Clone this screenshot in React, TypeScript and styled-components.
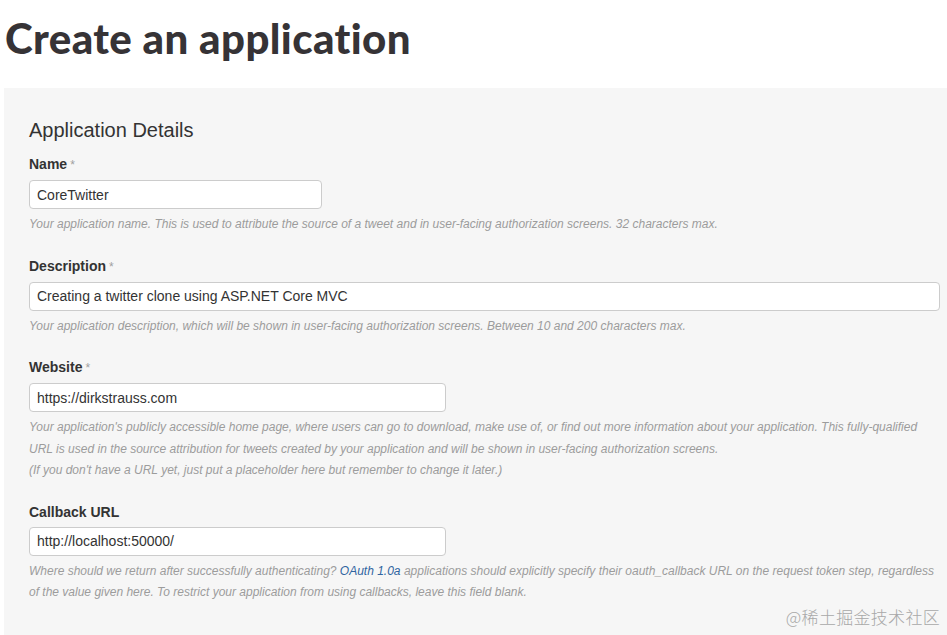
import React from 'react';
import styled, { createGlobalStyle } from 'styled-components';

const GlobalStyle = createGlobalStyle`
  html, body {
    margin: 0;
    padding: 0;
    background: #ffffff;
    font-family: 'Liberation Sans', Arial, sans-serif;
  }
`;

const Page = styled.div`
  position: relative;
  width: 947px;
  height: 635px;
  overflow: hidden;
`;

const Title = styled.h1`
  margin: 13px 0 0 5px;
  height: 50px;
  line-height: 50px;
  font-family: 'Lato', 'Liberation Sans', sans-serif;
  font-weight: 900;
  font-size: 42px;
  letter-spacing: 0.4px;
  color: #363336;
`;

const Panel = styled.div`
  margin: 25px 0 0 4px;
  padding: 31px 7px 60px 25px;
  background: #f6f6f6;
`;

const Heading = styled.h3`
  margin: 0 0 13px;
  font-size: 20px;
  line-height: 22px;
  font-weight: normal;
  color: #333333;
`;

const Group = styled.div`
  margin-bottom: 20px;
`;

const Label = styled.label`
  display: block;
  margin-bottom: 5px;
  font-size: 14px;
  line-height: 20px;
  font-weight: bold;
  color: #333333;
`;

const Required = styled.span`
  font-weight: normal;
  font-size: 12px;
  color: #a0a0a0;
  margin-left: 3px;
`;

const Input = styled.input<{ $width: number }>`
  display: block;
  box-sizing: border-box;
  width: ${({ $width }) => $width}px;
  height: 29px;
  padding: 0 7px;
  border: 1px solid #cccccc;
  border-radius: 4px;
  background: #ffffff;
  font-family: 'Liberation Sans', Arial, sans-serif;
  font-size: 14px;
  color: #333333;
  outline: none;
`;

const Help = styled.p`
  margin: 5px 0 0;
  font-size: 12px;
  line-height: 21.5px;
  font-style: italic;
  color: #9c9c9c;
`;

const Link = styled.a`
  color: #2f64a0;
  text-decoration: none;
`;

const Watermark = styled.div`
  position: absolute;
  right: 7px;
  bottom: 6px;
  font-family: 'Noto Sans CJK SC', sans-serif;
  font-weight: 300;
  font-size: 17px;
  color: #a8a8a8;
  letter-spacing: 0.3px;
`;

export default function App() {
  return (
    <Page>
      <GlobalStyle />
      <Title>Create an application</Title>
      <Panel>
        <Heading>Application Details</Heading>

        <Group>
          <Label>
            Name<Required>*</Required>
          </Label>
          <Input $width={293} defaultValue="CoreTwitter" />
          <Help>
            Your application name. This is used to attribute the source of a tweet and in user-facing
            authorization screens. 32 characters max.
          </Help>
        </Group>

        <Group>
          <Label>
            Description<Required>*</Required>
          </Label>
          <Input $width={911} defaultValue="Creating a twitter clone using ASP.NET Core MVC" />
          <Help>
            Your application description, which will be shown in user-facing authorization screens.
            Between 10 and 200 characters max.
          </Help>
        </Group>

        <Group>
          <Label>
            Website<Required>*</Required>
          </Label>
          <Input $width={417} defaultValue="https://dirkstrauss.com" />
          <Help>
            Your application's publicly accessible home page, where users can go to download, make use
            of, or find out more information about your application. This fully-qualified URL is used
            in the source attribution for tweets created by your application and will be shown in
            user-facing authorization screens.
            <br />
            (If you don't have a URL yet, just put a placeholder here but remember to change it later.)
          </Help>
        </Group>

        <Group>
          <Label>Callback URL</Label>
          <Input $width={417} defaultValue="http://localhost:50000/" />
          <Help>
            Where should we return after successfully authenticating? <Link href="#">OAuth 1.0a</Link>{' '}
            applications should explicitly specify their oauth_callback URL on the request token step,
            regardless of the value given here. To restrict your application from using callbacks,
            leave this field blank.
          </Help>
        </Group>
      </Panel>
      <Watermark>@稀土掘金技术社区</Watermark>
    </Page>
  );
}
